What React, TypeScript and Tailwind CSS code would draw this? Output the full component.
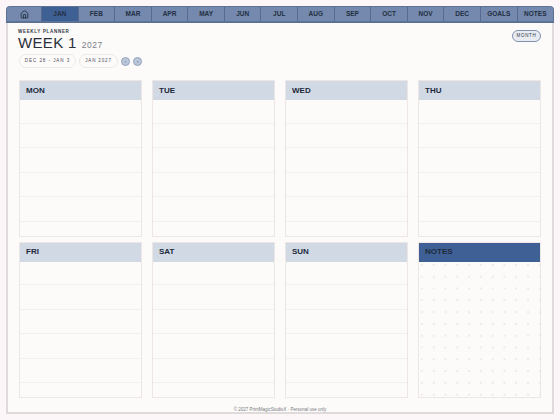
import { Home } from "lucide-react";

const tabs = ["JAN", "FEB", "MAR", "APR", "MAY", "JUN", "JUL", "AUG", "SEP", "OCT", "NOV", "DEC", "GOALS", "NOTES"];
const days = ["MON", "TUE", "WED", "THU", "FRI", "SAT", "SUN"];

function DayCard({ name }: { name: string }) {
  return (
    <div className="flex flex-col min-h-0 border border-[#eee5e5] bg-[#fdfbfa]">
      <div className="h-[19px] shrink-0 bg-[#d0d9e4] pl-[6px] flex items-center text-[8px] font-bold text-[#1e2a3c]">
        {name}
      </div>
      <div className="h-[23.5px] border-b border-[#f3efee]" />
      <div className="h-[24.5px] border-b border-[#f3efee]" />
      <div className="h-[24.5px] border-b border-[#f3efee]" />
      <div className="h-[24.5px] border-b border-[#f3efee]" />
      <div className="h-[24.5px] border-b border-[#f3efee]" />
      <div className="flex-1" />
    </div>
  );
}

export default function App() {
  return (
    <div className="w-[560px] h-[420px] overflow-hidden bg-[#fdf6f8] px-[6px] pt-[6px] pb-[6px] flex flex-col font-['Liberation_Sans',Arial,sans-serif]">
      <div className="flex h-[17px] shrink-0 rounded-t-[4px] overflow-hidden bg-[#7489ad] border border-b-2 border-[#5d7396]">
        <div className="w-[35px] shrink-0 flex items-center justify-center border-r border-[#566b8e]">
          <Home size={9} strokeWidth={2.25} className="text-[#1e2a3c]" />
        </div>
        {tabs.map((t) => (
          <div
            key={t}
            className={`flex-1 flex items-center justify-center text-[6.5px] font-bold text-[#232f42] border-r border-[#566b8e] last:border-r-0 ${
              t === "JAN" ? "bg-[#3f6094]" : ""
            }`}
          >
            {t}
          </div>
        ))}
      </div>

      <div className="flex-1 flex flex-col min-h-0 bg-[#fdfafa] border-x-2 border-b-2 border-[#dedbda] pl-[11px] pr-[11px] pt-[6px]">
        <div className="flex justify-between h-[51px] shrink-0">
          <div className="-ml-px">
            <div className="text-[4.5px] font-bold tracking-[0.7px] leading-[5px] text-[#2e3642]">WEEKLY PLANNER</div>
            <div className="flex items-baseline gap-[5px] h-[16px] leading-[16px] mt-[1px]">
              <span className="text-[15px] text-[#2a303a] tracking-[0.35px]">WEEK 1</span>
              <span className="text-[8.5px] text-[#7a8088] tracking-[0.5px]">2027</span>
            </div>
            <div className="flex items-center gap-[3px] mt-[3px] ml-px">
              <div className="h-[14px] w-[57px] rounded-full border border-[#eee9e9] flex items-center justify-center text-[4.5px] tracking-[0.95px] text-[#4a505a]">
                DEC 28 - JAN 3
              </div>
              <div className="h-[14px] w-[39px] rounded-full border border-[#eee9e9] flex items-center justify-center text-[4.5px] tracking-[0.85px] text-[#4a505a]">
                JAN 2027
              </div>
              <div className="w-[9px] h-[9px] rounded-full bg-[#bcc8da] border border-[#92a2bd] flex items-center justify-center text-[5px] leading-none text-[#5f6e88]">‹</div>
              <div className="w-[9px] h-[9px] rounded-full bg-[#bcc8da] border border-[#92a2bd] flex items-center justify-center text-[5px] leading-none text-[#5f6e88]">›</div>
            </div>
          </div>
          <div className="w-[29px] h-[12px] mt-px rounded-full bg-[#e8ecf2] border border-[#8192ae] flex items-center justify-center text-[4.5px] tracking-[0.7px] text-[#2e3642]">
            MONTH
          </div>
        </div>

        <div className="grid grid-cols-4 auto-rows-[156.5px] gap-x-[10px] gap-y-[5px]">
          {days.map((d) => (
            <DayCard key={d} name={d} />
          ))}
          <div className="flex flex-col border border-[#eee5e5]">
            <div className="h-[19px] shrink-0 bg-[#3f6094] pl-[6px] flex items-center text-[8px] font-bold text-[#1e2a3c]">
              NOTES
            </div>
            <div className="flex-1 bg-[#fdfbfa] bg-[radial-gradient(circle,#d6d2d0_0.55px,transparent_0.8px)] bg-[size:11.8px_11.8px] bg-[position:-3px_-3px]" />
          </div>
        </div>

        <div className="mt-[9px] text-center text-[4.5px] leading-[6px] text-[#777b81]">© 2027 PrintMagicStudioX · Personal use only</div>
      </div>
    </div>
  );
}
